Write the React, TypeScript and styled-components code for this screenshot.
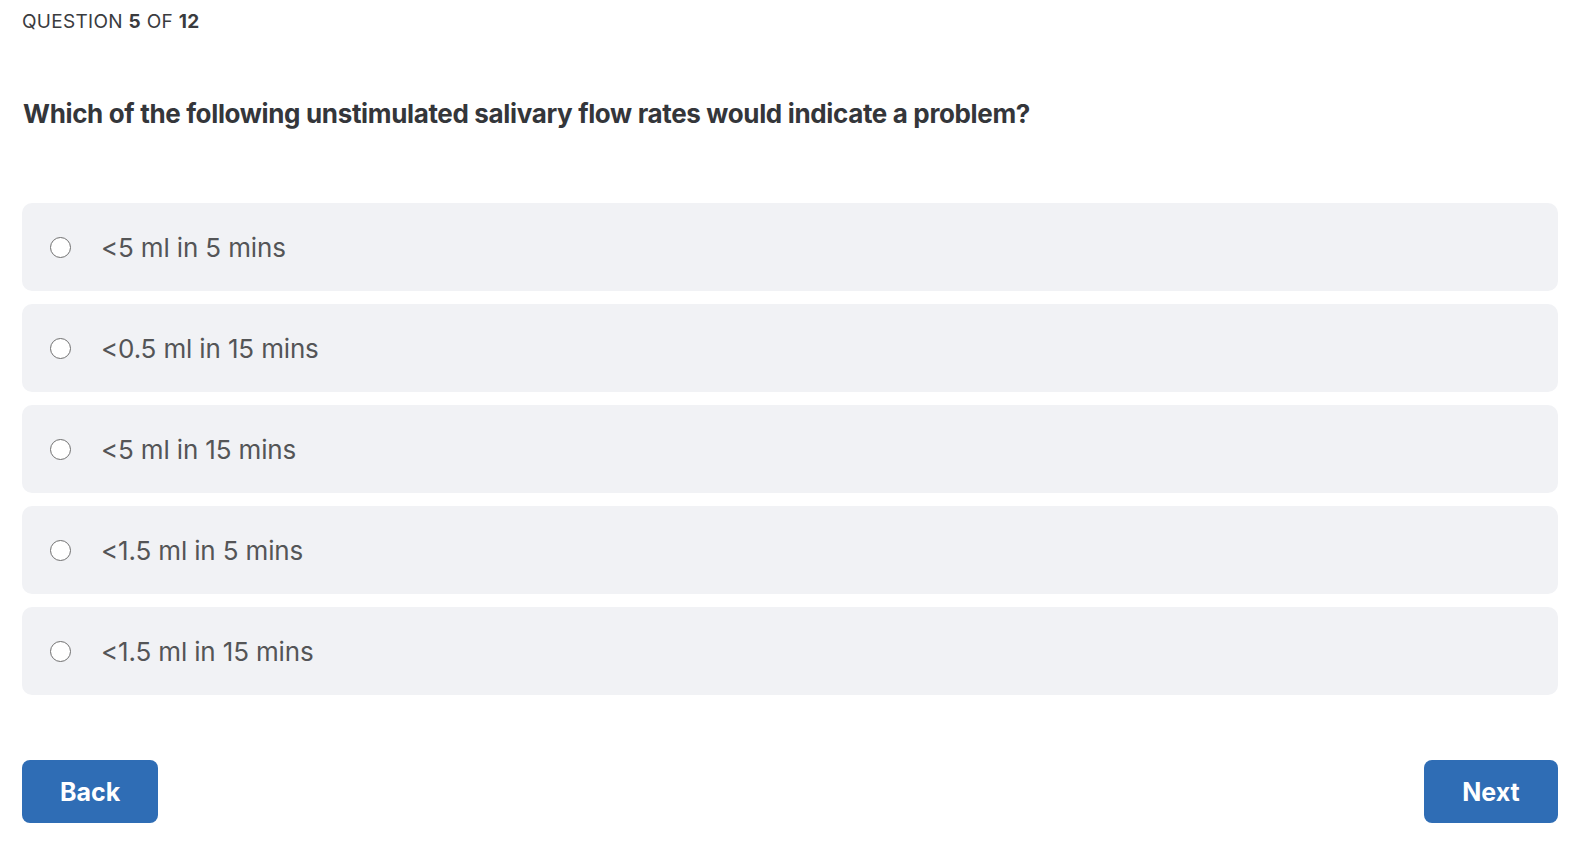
import styled, { createGlobalStyle } from "styled-components";

type Option = { id: string; label: string };

const options: Option[] = [
  { id: "a", label: "<5 ml in 5 mins" },
  { id: "b", label: "<0.5 ml in 15 mins" },
  { id: "c", label: "<5 ml in 15 mins" },
  { id: "d", label: "<1.5 ml in 5 mins" },
  { id: "e", label: "<1.5 ml in 15 mins" },
];

const App = () => {
  return (
    <>
      <GlobalStyle />
      <QuizContainer>
        <Progress>
          QUESTION <strong>5</strong> OF <strong>12</strong>
        </Progress>
        <QuestionText>
          Which of the following unstimulated salivary flow rates would indicate a problem?
        </QuestionText>
        <OptionList>
          {options.map((opt) => (
            <OptionRow key={opt.id}>
              <RadioInput type="radio" name="answer" value={opt.id} />
              <OptionLabel>{opt.label}</OptionLabel>
            </OptionRow>
          ))}
        </OptionList>
        <NavBar>
          <NavButton>Back</NavButton>
          <NavButton>Next</NavButton>
        </NavBar>
      </QuizContainer>
    </>
  );
};

const GlobalStyle = createGlobalStyle`
  body {
    margin: 0;
    background: #ffffff;
    font-family: Inter, "Noto Sans", sans-serif;
  }
`;

const QuizContainer = styled.div`
  padding: 10px 22px 0 22px;
  display: flex;
  flex-direction: column;
`;

const Progress = styled.div`
  font-size: 19px;
  color: #3a3b3e;
  letter-spacing: 0.3px;
  line-height: 24px;

  strong {
    font-weight: 700;
  }
`;

const QuestionText = styled.h2`
  margin: 65px 0 0 1px;
  font-size: 26px;
  font-weight: 700;
  color: #34363a;
  line-height: 30px;
  letter-spacing: -0.35px;
`;

const OptionList = styled.div`
  margin-top: 74px;
  display: flex;
  flex-direction: column;
  gap: 13px;
`;

const OptionRow = styled.label`
  display: flex;
  align-items: center;
  height: 88px;
  padding: 0 28px;
  background: #f1f2f5;
  border-radius: 10px;
  cursor: pointer;
`;

const RadioInput = styled.input`
  appearance: none;
  width: 21px;
  height: 21px;
  margin: 0;
  border: 1.5px solid #707070;
  border-radius: 50%;
  background: #ffffff;
  flex-shrink: 0;
`;

const OptionLabel = styled.span`
  margin-left: 30px;
  font-size: 26px;
  color: #545557;
  letter-spacing: -0.15px;
`;

const NavBar = styled.div`
  margin-top: 65px;
  display: flex;
  justify-content: space-between;
`;

const NavButton = styled.button`
  height: 63px;
  padding: 0 38px;
  min-width: 134px;
  background: #2f6db5;
  color: #ffffff;
  border: none;
  border-radius: 8px;
  font-family: Inter, "Noto Sans", sans-serif;
  font-size: 25px;
  font-weight: 700;
  cursor: pointer;
`;

export default App;
